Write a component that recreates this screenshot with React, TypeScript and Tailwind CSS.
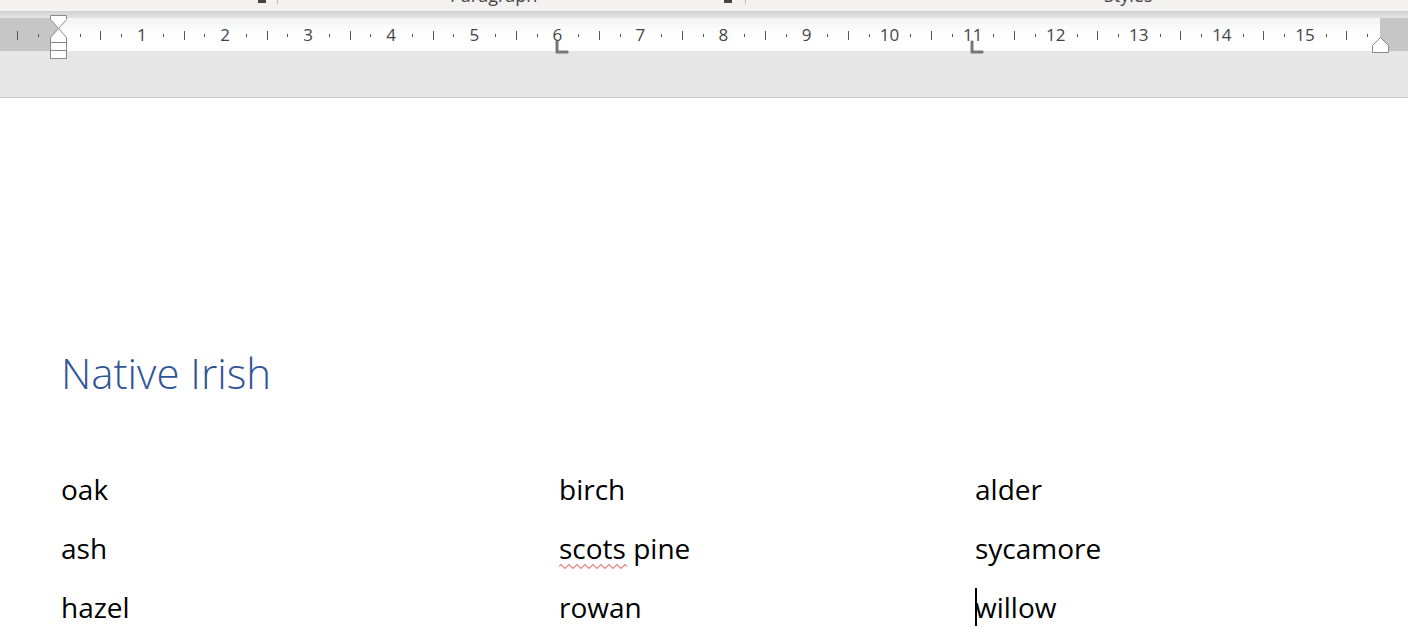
import React from "react";

const CM = 83.07;
const ORIGIN = 58.9;

function Ruler() {
  const ticks: React.ReactNode[] = [];
  for (let q = -2; q <= 63; q++) {
    const x = ORIGIN + (q * CM) / 4;
    if (x > 1378) break;
    const m = ((q % 4) + 4) % 4;
    if (m === 0) {
      const n = q / 4;
      if (n > 0) {
        ticks.push(
          <text key={q} x={x} y={41} textAnchor="middle" fontSize={17} fill="#444" fontFamily="'Open Sans', sans-serif">
            {n}
          </text>
        );
      }
    } else if (m === 2) {
      ticks.push(<rect key={q} x={Math.round(x)} y={31} width={1} height={9} fill="#555" />);
    } else {
      ticks.push(<rect key={q} x={Math.round(x)} y={34} width={1} height={3} fill="#555" />);
    }
  }
  return (
    <svg width={1408} height={98} className="absolute left-0 top-[-11px]">
      {ticks}
      {/* tab stops */}
      <path d="M556 41 h2 v10 h10 v2 h-12 z" fill="#777" stroke="#777" strokeWidth={1} />
      <path d="M971 41 h2 v10 h10 v2 h-12 z" fill="#777" stroke="#777" strokeWidth={1} />
      {/* left indent hourglass */}
      <path d="M50.5 15.5 h16 v4 l-8 9 l-8 -9 z" fill="#fff" stroke="#888" />
      <path d="M58.5 28.5 l8 9 v5 h-16 v-5 z" fill="#fff" stroke="#888" />
      <rect x={50.5} y={42.5} width={16} height={16} fill="#fff" stroke="#888" />
      <line x1={50.5} y1={50.5} x2={66.5} y2={50.5} stroke="#888" />
      {/* right indent */}
      <path d="M1372.5 52.5 v-7 l8 -8 l8 8 v7 z" fill="#fff" stroke="#888" />
    </svg>
  );
}

export default function App() {
  return (
    <div className="w-[1408px] h-[644px] bg-white overflow-hidden" style={{ fontFamily: "'Open Sans', sans-serif" }}>
      {/* ribbon bottom */}
      <div className="relative h-[11px] bg-[#f3f2f1] overflow-hidden text-[#444] text-[18px]">
        <span className="absolute left-[450px] top-[-16px] leading-[22px]">Paragraph</span>
        <span className="absolute left-[1104px] top-[-16px] leading-[22px]">Styles</span>
        <div className="absolute left-[258px] top-0 w-[8px] h-[3px] bg-[#444]" />
        <div className="absolute left-[277px] top-0 w-[1px] h-[4px] bg-[#bbb]" />
        <div className="absolute left-[724px] top-0 w-[8px] h-[3px] bg-[#444]" />
        <div className="absolute left-[745px] top-0 w-[1px] h-[4px] bg-[#bbb]" />
      </div>
      {/* ruler region */}
      <div className="relative">
        <div className="h-[7px] bg-gradient-to-b from-[#d0d0d0] to-[#e4e4e4]" />
        <div className="flex h-[33px]">
          <div className="w-[58px] bg-[#c6c6c6]" />
          <div className="w-[2px] bg-[#dcdcdc]" />
          <div className="flex-1 bg-gradient-to-b from-[#f4f4f4] via-white to-white" />
          <div className="w-[28px] bg-[#c6c6c6]" />
        </div>
        <div className="h-[46px] bg-[#e6e6e6]" />
        <div className="h-[1px] bg-[#c8c8c8]" />
        <Ruler />
      </div>
      {/* document */}
      <div className="pl-[61px] pt-[251px]">
        <h1 className="text-[42px] leading-[48px] font-light text-[#2f5597]">Native Irish</h1>
        <div className="mt-[63px] grid grid-cols-[498px_416px_1fr] text-[28px] leading-[59px] text-black">
          <div>oak</div>
          <div>birch</div>
          <div>alder</div>
          <div>ash</div>
          <div className="relative">
            <span className="relative">
              scots
              <svg className="absolute left-0 bottom-[-2px]" width={70} height={5}>
                <path
                  d="M0 2.5 l2 -2 l2 2 l2 2 l2 -2 l2 -2 l2 2 l2 2 l2 -2 l2 -2 l2 2 l2 2 l2 -2 l2 -2 l2 2 l2 2 l2 -2 l2 -2 l2 2 l2 2 l2 -2 l2 -2 l2 2 l2 2 l2 -2 l2 -2 l2 2 l2 2 l2 -2 l2 -2 l2 2 l2 2 l2 -2 l2 -2 l2 2"
                  fill="none"
                  stroke="#e02020"
                  strokeWidth={1}
                />
              </svg>
            </span>{" "}
            pine
          </div>
          <div>sycamore</div>
          <div>hazel</div>
          <div>rowan</div>
          <div className="relative">
            <span className="absolute left-0 top-[10px] w-[2px] h-[38px] bg-black" />
            willow
          </div>
        </div>
      </div>
    </div>
  );
}
